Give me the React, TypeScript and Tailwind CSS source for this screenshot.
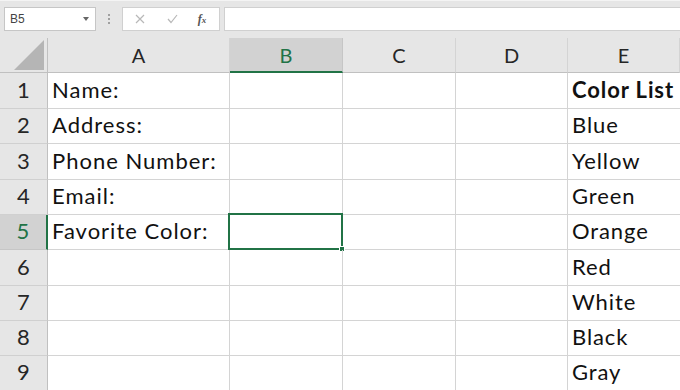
import React from "react";

const cols = [
  { key: "A", w: "w-[182px]" },
  { key: "B", w: "w-[113px]" },
  { key: "C", w: "w-[113px]" },
  { key: "D", w: "w-[112px]" },
  { key: "E", w: "flex-1" },
];

const rowHeights = ["h-[36px]", "h-[35px]", "h-[36px]", "h-[35px]", "h-[35px]", "h-[36px]", "h-[35px]", "h-[35px]", "h-[35px]"];

const colA = ["Name:", "Address:", "Phone Number:", "Email:", "Favorite Color:", "", "", "", ""];
const colE = ["Color List", "Blue", "Yellow", "Green", "Orange", "Red", "White", "Black", "Gray"];

export default function App() {
  return (
    <div className="w-[680px] h-[390px] overflow-hidden bg-white flex flex-col" style={{ fontFamily: "Lato, 'Open Sans', sans-serif" }}>
      {/* formula bar */}
      <div className="h-[38px] bg-[#e6e6e6] border-t border-[#f4f4f4] flex items-start pt-[6px] pl-[4px] shrink-0">
        <div className="w-[92px] h-[24px] bg-white border border-[#c6c6c6] flex items-center pl-[5px] pr-[6px]">
          <span className="text-[12px] text-[#444] flex-1" style={{ fontFamily: "'Liberation Sans', sans-serif" }}>B5</span>
          <svg width="6" height="4" viewBox="0 0 6 4"><path d="M0 0h6L3 4z" fill="#666" /></svg>
        </div>
        <div className="w-[26px] h-[24px] flex flex-col items-center justify-center gap-[2px]">
          <div className="w-[2px] h-[2px] bg-[#a0a0a0]" />
          <div className="w-[2px] h-[2px] bg-[#a0a0a0]" />
          <div className="w-[2px] h-[2px] bg-[#a0a0a0]" />
        </div>
        <div className="w-[98px] h-[24px] bg-white border border-[#d0d0d0] flex items-center">
          <div className="w-[34px] flex justify-center">
            <svg width="10" height="10" viewBox="0 0 10 10"><path d="M1 1L9 9M9 1L1 9" stroke="#b8b8b8" strokeWidth="1.2" /></svg>
          </div>
          <div className="w-[30px] flex justify-center">
            <svg width="11" height="10" viewBox="0 0 11 10"><path d="M1 5L4 8.5L10 1" stroke="#b8b8b8" strokeWidth="1.2" fill="none" /></svg>
          </div>
          <div className="w-[30px] flex justify-center">
            <span className="text-[12px] italic font-bold text-[#555]" style={{ fontFamily: "'Liberation Serif', serif" }}>f<span className="text-[9px]">x</span></span>
          </div>
        </div>
        <div className="ml-[4px] flex-1 h-[24px] bg-white border-y border-l border-[#d0d0d0]" />
      </div>

      {/* column headers */}
      <div className="h-[35px] flex shrink-0 bg-[#e6e6e6]">
        <div className="w-[48px] h-full border-r border-b border-[#c0c0c0] flex items-end justify-end pr-[3px] pb-[2px]">
          <svg width="30" height="30" viewBox="0 0 30 30"><path d="M30 0V30H0z" fill="#b5b5b5" /></svg>
        </div>
        {cols.map((c) =>
          c.key === "B" ? (
            <div key={c.key} className={`${c.w} h-full bg-[#d2d2d2] border-r border-[#c6c6c6] border-b-2 border-b-[#217346] flex items-center justify-center text-[20px] text-[#217346]`}>
              {c.key}
            </div>
          ) : (
            <div key={c.key} className={`${c.w} h-full border-r border-[#d4d4d4] border-b border-b-[#c0c0c0] flex items-center justify-center text-[20px] text-[#262626]`}>
              {c.key}
            </div>
          )
        )}
      </div>

      {/* rows */}
      {rowHeights.map((h, i) => {
        const sel = i === 4;
        return (
          <div key={i} className={`${h} flex shrink-0`}>
            <div
              className={
                sel
                  ? "w-[48px] h-full bg-[#d2d2d2] border-r-2 border-r-[#217346] border-b border-b-[#c6c6c6] flex items-end justify-center pb-[2px] text-[22px] text-[#217346]"
                  : "w-[48px] h-full bg-[#e6e6e6] border-r border-r-[#c0c0c0] border-b border-b-[#d0d0d0] flex items-end justify-center pb-[2px] text-[22px] text-[#262626]"
              }
            >
              {i + 1}
            </div>
            <div className="w-[182px] h-full border-r border-b border-[#d4d4d4] flex items-end pl-[4px] pb-[2px] text-[22px] tracking-[1px] text-[#111] whitespace-nowrap">
              {colA[i]}
            </div>
            <div className="relative w-[113px] h-full border-r border-b border-[#d4d4d4]">
              {sel && (
                <div className="absolute -left-[2px] -top-[2px] w-[115px] h-[37px] border-2 border-[#217346]">
                  <div className="absolute -right-[4px] -bottom-[4px] w-[6px] h-[6px] bg-[#217346] border border-white" />
                </div>
              )}
            </div>
            <div className="w-[113px] h-full border-r border-b border-[#d4d4d4]" />
            <div className="w-[112px] h-full border-r border-b border-[#d4d4d4]" />
            <div className={`flex-1 h-full border-b border-[#d4d4d4] flex items-end pl-[4px] pb-[2px] text-[22px] tracking-[0.9px] text-[#111] whitespace-nowrap ${i === 0 ? "font-bold" : ""}`}>
              {colE[i]}
            </div>
          </div>
        );
      })}
    </div>
  );
}
